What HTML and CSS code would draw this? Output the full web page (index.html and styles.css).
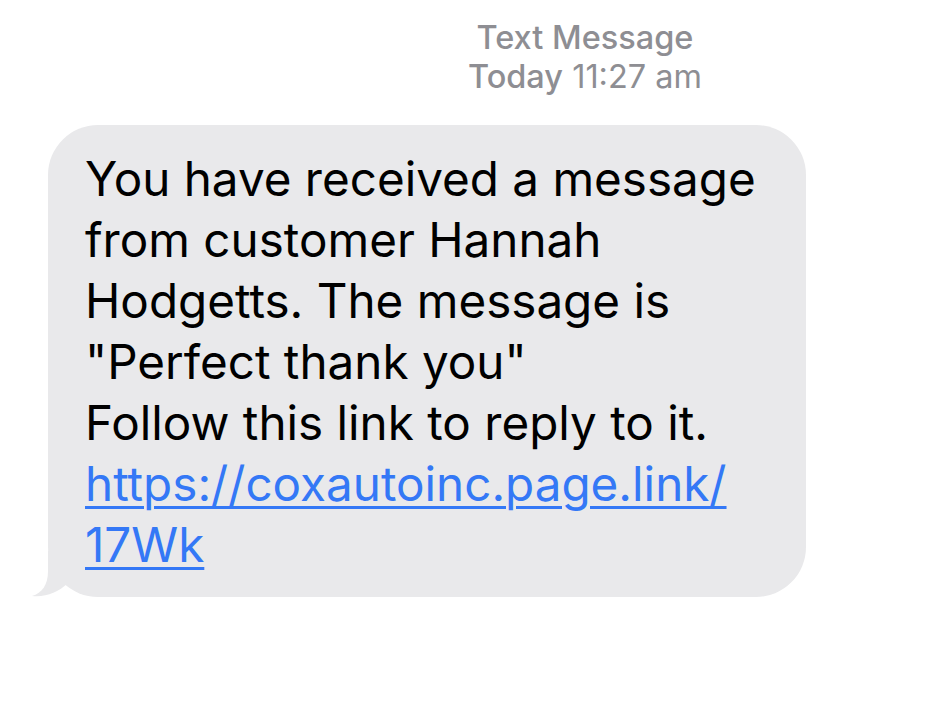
FILE: index.html
```html
<!DOCTYPE html>
<html>
<head>
<meta charset="utf-8">
<link rel="stylesheet" href="styles.css">
</head>
<body>
<div class="thread">
  <div class="stamp">
    <div class="stamp-title">Text Message</div>
    <div class="stamp-time"><span class="day">Today</span> 11:27 am</div>
  </div>
  <div class="row">
    <div class="bubble">
      <p class="msg">You have received a message<br>from customer Hannah<br>Hodgetts. The message is<br>"Perfect thank you"<br>Follow this link to reply to it.<br><a class="link" href="#">https://coxautoinc.page.link/<br>17Wk</a></p>
      <svg class="tail" width="50" height="46" viewBox="0 0 50 46">
        <path d="M18 0 L18 20 C18 34 12 42 2 45 C16 46.5 28 41 37 33 L50 33 L50 0 Z" fill="#e9e9eb"/>
      </svg>
    </div>
  </div>
</div>
</body>
</html>
```
FILE: styles.css
```css
html, body {
  margin: 0;
  padding: 0;
  background: #ffffff;
}
body {
  font-family: Inter, "Noto Sans", sans-serif;
  width: 926px;
  height: 701px;
  overflow: hidden;
}
.thread {
  display: flex;
  flex-direction: column;
}
.stamp {
  padding-left: 244px;
  padding-top: 18px;
  text-align: center;
  color: #8e8e93;
  font-size: 32.5px;
  line-height: 39px;
}
.stamp-title {
  font-weight: 500;
}
.stamp-time .day {
  font-weight: 500;
}
.row {
  display: flex;
  padding-left: 48px;
  padding-top: 29px;
}
.bubble {
  position: relative;
  width: 758px;
  box-sizing: border-box;
  background: #e9e9eb;
  border-radius: 50px;
  padding: 23px 30px 22px 37px;
}
.msg {
  margin: 0;
  font-size: 47.6px;
  line-height: 61px;
  color: #000;
  white-space: nowrap;
}
.link {
  color: #3478f6;
  text-decoration: underline;
  text-decoration-thickness: 3px;
  text-underline-offset: 5px;
}
.tail {
  position: absolute;
  left: -18px;
  bottom: 0;
}
```
